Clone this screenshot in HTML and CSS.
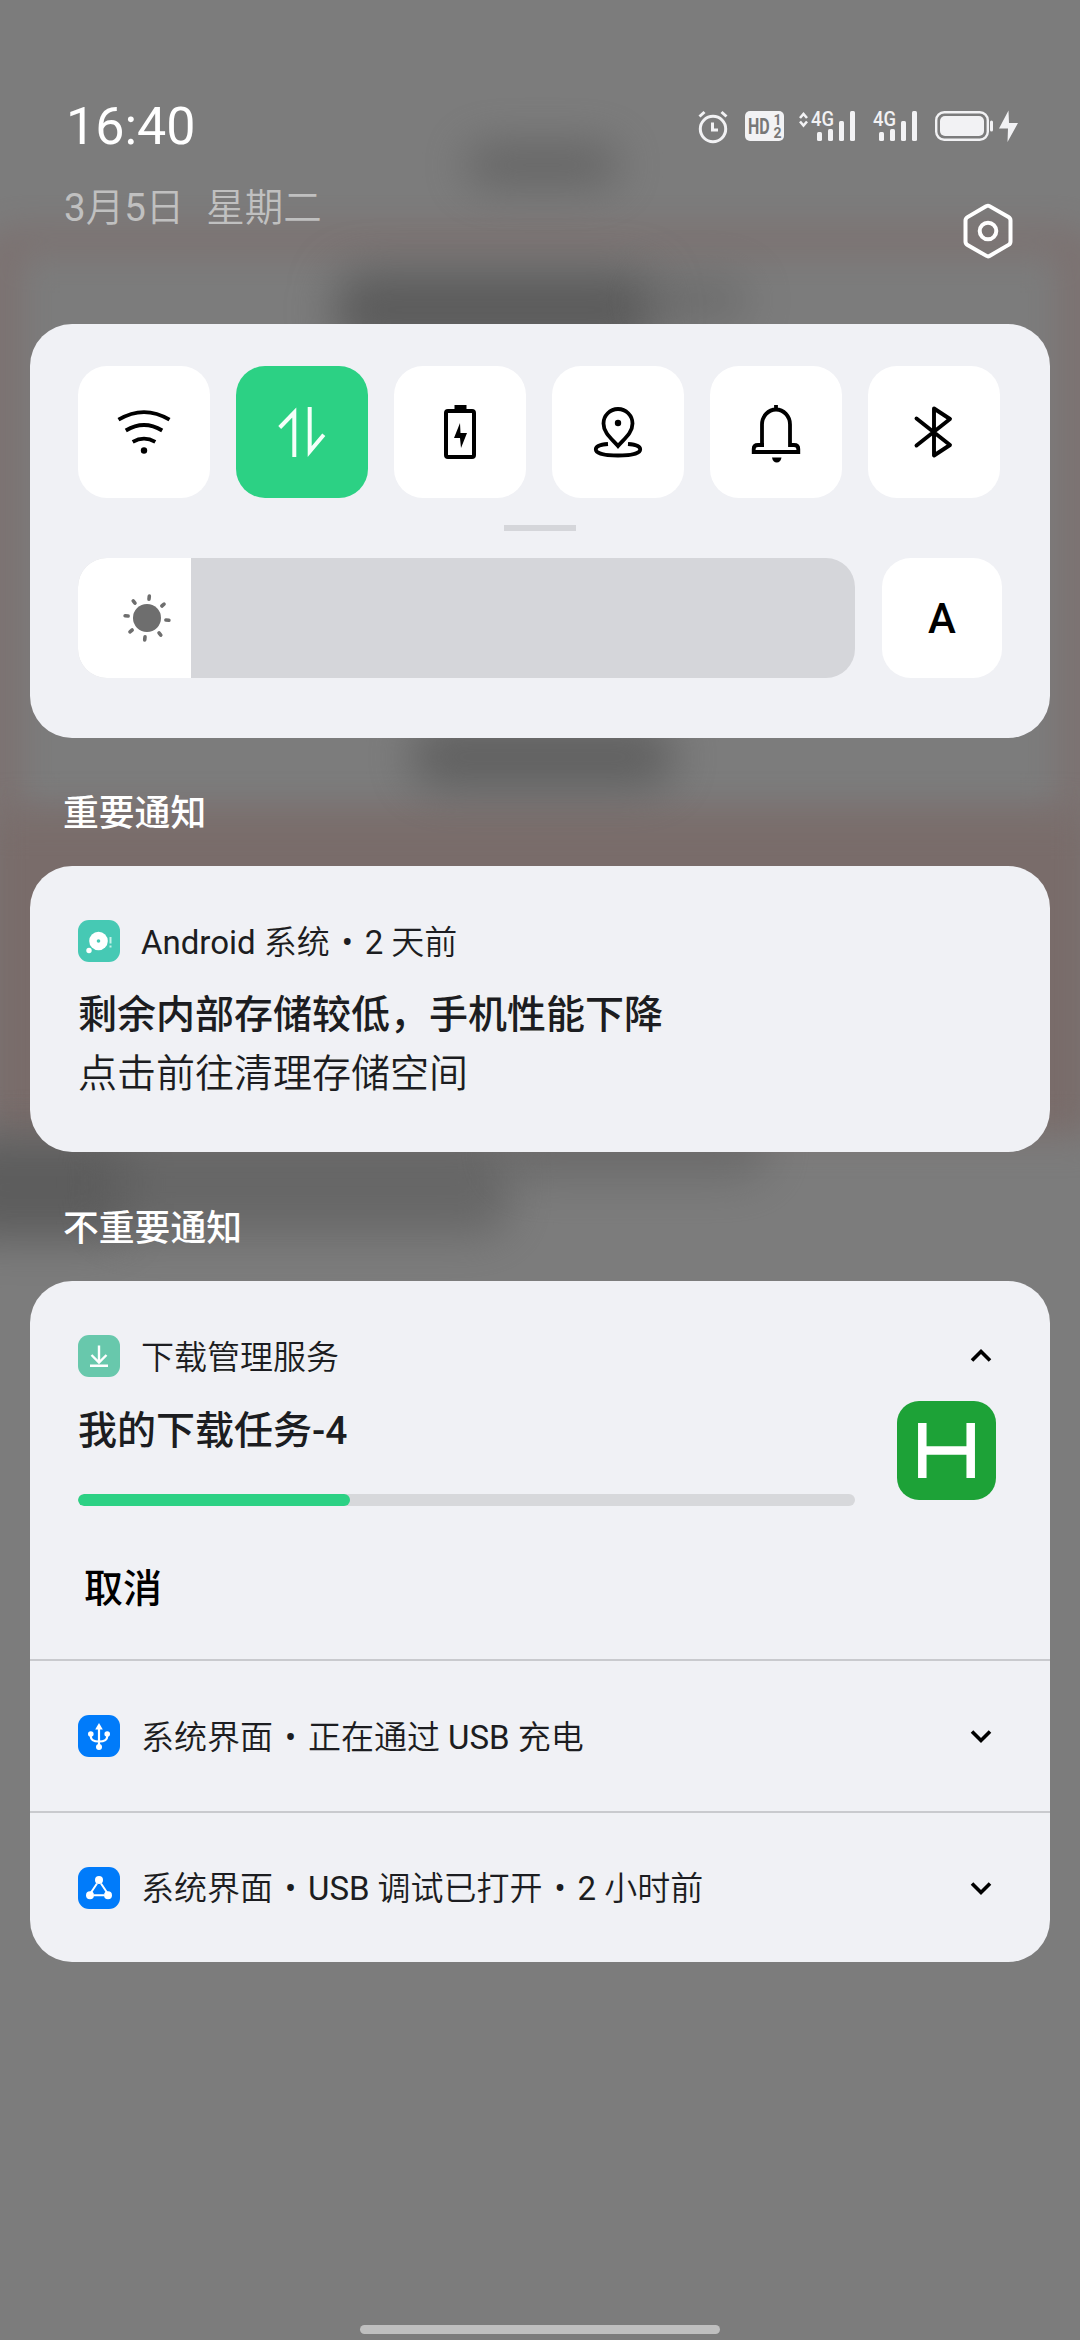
FILE: index.html
```html
<!DOCTYPE html>
<html lang="zh-CN">
<head>
<meta charset="utf-8">
<title>通知中心</title>
<link rel="stylesheet" href="styles.css">
</head>
<body>
<div class="screen">
  <div class="backdrop" aria-hidden="true">
    <i class="blob frame-a"></i><i class="blob frame-b"></i>
    <i class="blob b1"></i><i class="blob b2"></i><i class="blob b3"></i><i class="blob b4"></i><i class="blob b5"></i><i class="blob b6"></i><i class="blob b7"></i>
  </div>

  <header class="top">
    <div class="when">
      <div class="clock">16:40</div>
      <div class="date"><span><b>3</b>月<b>5</b>日</span><span>星期二</span></div>
    </div>
    <div class="status">
      <svg class="status-icons" width="330" height="40" viewBox="0 0 330 40" fill="#f2f2f4">
        <g fill="none" stroke="#f2f2f4" stroke-width="3"><circle cx="22" cy="23" r="12.700"/><path d="M21.500 16.500v7.500h5.500M8.500 10.500l5-4.500M35.500 10.500l-5-4.500"/></g>
        <rect x="54" y="5" width="39" height="30" rx="5"/>
        <g class="hd"><text transform="translate(57 28) scale(.8 1.100)" font-size="20">HD</text><text x="82.500" y="18.500" font-size="14">1</text><text x="82.500" y="31.500" font-size="14">2</text></g>
        <path d="M109 12l3.500-4 3.500 4M109 15.500l3.500 4 3.500-4" fill="none" stroke="#f2f2f4" stroke-width="2.600"/>
        <g class="net"><text x="120" y="20" textLength="23" lengthAdjust="spacingAndGlyphs">4G</text><text x="182" y="20" textLength="23" lengthAdjust="spacingAndGlyphs">4G</text></g>
        <g><rect x="126" y="26" width="5" height="9" rx="1.500"/><rect x="137" y="23" width="5" height="12" rx="1.500"/><rect x="148" y="15" width="5" height="20" rx="1.500"/><rect x="159" y="5" width="5" height="30" rx="1.500"/></g>
        <g><rect x="188" y="26" width="5" height="9" rx="1.500"/><rect x="199" y="23" width="5" height="12" rx="1.500"/><rect x="210" y="15" width="5" height="20" rx="1.500"/><rect x="221" y="5" width="5" height="30" rx="1.500"/></g>
        <rect x="245.200" y="6.200" width="51.600" height="27.600" rx="8" fill="none" stroke="#f2f2f4" stroke-width="2.400"/>
        <rect x="249" y="10" width="44" height="20" rx="5"/><rect x="299" y="14.500" width="3" height="11" rx="1.500"/>
        <path d="M317.500 4.500L308 22.500h9L316.500 36 327 17h-9z"/>
      </svg>
      <svg class="gear" width="56" height="60" viewBox="0 0 56 60" fill="none" stroke="#fff" stroke-width="4"><path d="M26.500 5.100q1.500-.9 3 0l19 11q2 1.200 2 3.500v20.800q0 2.300-2 3.500l-19 11q-1.500.9-3 0l-19-11q-2-1.200-2-3.500V19.600q0-2.300 2-3.500z"/><circle cx="28" cy="30" r="8.300"/></svg>
    </div>
  </header>

  <section class="card controls">
    <div class="tiles">
      <div class="tile"><svg viewBox="0 0 132 132"><g fill="none" stroke="#000" stroke-width="3.800"><path d="M40.500 53.700Q66 38.500 91.500 53.700M47.800 64.500Q66 53.500 84.200 64.500M54.700 75.800Q66 69.500 77.300 75.800"/></g><circle cx="66" cy="84.500" r="3.200"/></svg></div>
      <div class="tile on"><svg viewBox="0 0 132 132" fill="none" stroke="#f4fff9" stroke-width="4"><path d="M43.700 61.500L58.300 46.500V91M73.700 41v44.500L87.800 68.700"/></svg></div>
      <div class="tile"><svg viewBox="0 0 132 132"><rect x="52" y="45" width="28" height="46" rx="2" fill="none" stroke="#000" stroke-width="4"/><path d="M60.500 39h12v5h-12zM66 57l-6 15h6l1 10 6-15h-6.500z"/></svg></div>
      <div class="tile"><svg viewBox="0 0 132 132"><path d="M66 80C60 73 51.500 67 51.500 57.500a14.500 14.500 0 0 1 29 0C80.500 67 72 73 66 80z" fill="none" stroke="#000" stroke-width="3.800"/><circle cx="66" cy="57" r="3.200"/><path d="M56 78C48.500 78.500 43.800 80.500 43.800 83.500c0 4 9.900 6 22.200 6s22.200-2 22.200-6c0-3-4.700-5-12.200-5.500" fill="none" stroke="#000" stroke-width="3.800"/></svg></div>
      <div class="tile"><svg viewBox="0 0 132 132"><g fill="none" stroke="#000" stroke-width="3.800"><path d="M66 39v5M52 79V58.500a14 15 0 0 1 28 0V79h4q4.300 0 4.300 4v3H43.700V83q0-4 4.300-4h6"/></g><path d="M62 91.500h9.500q-1 5-4.750 5T62 91.500z"/></svg></div>
      <div class="tile"><svg viewBox="0 0 132 132" fill="none" stroke="#000" stroke-width="3.900" stroke-linejoin="round" stroke-linecap="round"><path d="M48.500 52.500L82 79 66 89.500v-47L82 53 48.500 79.500"/></svg></div>
    </div>
    <div class="handle"></div>
    <div class="brightness">
      <div class="slider"><div class="level"><svg viewBox="0 0 48 48" width="48" height="48" fill="#6e6e6e"><circle cx="24" cy="24" r="14"/><g stroke="#6e6e6e" stroke-width="3.600" stroke-linecap="round" transform="rotate(6 24 24)"><path d="M24 2v3M24 43v3M2 24h3M43 24h3M8.500 8.500l2 2M37.500 37.500l2 2M39.500 8.500l-2 2M10.500 37.500l-2 2"/></g></svg></div></div>
      <div class="auto">A</div>
    </div>
  </section>

  <h2 class="label">重要通知</h2>
  <section class="card storage">
    <div class="row">
      <svg class="app" viewBox="0 0 42 42"><rect width="42" height="42" rx="11" fill="#46c9b4"/><circle cx="20.500" cy="21" r="9.300" fill="#fff"/><circle cx="20.500" cy="21" r="1.800" fill="#46c9b4"/><circle cx="11" cy="30.500" r="2.700" fill="#fff"/><path d="M32.500 17v6.500M32.500 25.500v2" stroke="#c5f1e8" stroke-width="2"/></svg>
      <span class="source"><b>Android</b> 系统<i class="dot">•</i><b>2</b> 天前</span>
    </div>
    <div class="title">剩余内部存储较低，手机性能下降</div>
    <div class="body">点击前往清理存储空间</div>
  </section>

  <h2 class="label second">不重要通知</h2>
  <section class="card list">
    <article class="download">
      <div class="row">
        <svg class="app" viewBox="0 0 42 42"><rect width="42" height="42" rx="11" fill="#68c8ac"/><path d="M21 10.500v16M13.500 20l7.500 7.500 7.500-7.500M12 30.800h18" fill="none" stroke="#fff" stroke-width="2.400"/></svg>
        <span class="source">下载管理服务</span>
        <svg class="chev" viewBox="0 0 24 16"><path d="M3 12.500l9-9 9 9"/></svg>
      </div>
      <div class="task">
        <div class="task-main">
          <div class="title">我的下载任务-4</div>
          <div class="progress"><div class="done" style="width:35%"></div></div>
        </div>
        <svg class="thumb" viewBox="0 0 99 99"><rect width="99" height="99" rx="22" fill="#1da237"/><path d="M25.300 22v55M73.700 22v55M25 49.500h49" stroke="#fff" stroke-width="8.500"/></svg>
      </div>
      <div class="cancel">取消</div>
    </article>
    <article class="row compact">
      <svg class="app" viewBox="0 0 42 42"><rect width="42" height="42" rx="11" fill="#007bfa"/><g fill="none" stroke="#fff" stroke-width="2.200"><path d="M21 12v20M12.800 19v2.500q0 5 8.200 5t8.200-5V19"/></g><path d="M21 8l3.800 6.500h-7.600z" fill="#fff"/><circle cx="21" cy="32" r="3" fill="#fff"/><circle cx="12.800" cy="19" r="2.800" fill="#fff"/><circle cx="29.200" cy="19" r="2.800" fill="#fff"/></svg>
      <span class="source">系统界面<i class="dot">•</i>正在通过 <b>USB</b> 充电</span>
      <svg class="chev" viewBox="0 0 24 16"><path d="M3 3.500l9 9 9-9"/></svg>
    </article>
    <article class="row compact">
      <svg class="app" viewBox="0 0 42 42"><rect width="42" height="42" rx="11" fill="#007bfa"/><path d="M19 16.500l-6 9M23 16.500l6 9M16 28.300h10" stroke="#fff" stroke-width="2"/><circle cx="21" cy="13" r="4" fill="#fff"/><circle cx="12" cy="28.300" r="4" fill="#fff"/><circle cx="30" cy="28.300" r="4" fill="#fff"/></svg>
      <span class="source">系统界面<i class="dot">•</i><b>USB</b> 调试已打开<i class="dot">•</i><b>2</b> 小时前</span>
      <svg class="chev" viewBox="0 0 24 16"><path d="M3 3.500l9 9 9-9"/></svg>
    </article>
  </section>
  <div class="home"></div>
</div>
</body>
</html>
```
FILE: styles.css
```css
* { box-sizing: border-box; }
body { margin: 0; font-family: Roboto, "Noto Sans CJK SC", sans-serif; background: #7c7c7c; color: #1c1d21; }
svg { display: block; flex: none; }
.screen { position: relative; isolation: isolate; width: 1080px; height: 2340px; padding: 0 30px 6px; display: flex; flex-direction: column; overflow: hidden; background: #7c7c7c; }

/* out-of-focus app behind the shade */
.backdrop { position: absolute; inset: 0; z-index: -1; overflow: hidden; }
.blob { position: absolute; filter: blur(22px); background: #5c5c5c; border-radius: 30px; }
.frame-a { left: -15px; top: 228px; width: 1110px; height: 610px; background: none; border: 30px solid #7c6866; border-width: 24px 34px; filter: blur(17px); opacity: .6; }
.frame-b { left: -15px; top: 815px; width: 1110px; height: 320px; border-radius: 0; background: #796c6a; filter: blur(18px); }
.b1 { left: 465px; top: 143px; width: 155px; height: 44px; opacity: .7; }
.b2 { left: 335px; top: 270px; width: 320px; height: 80px; }
.b3 { left: 410px; top: 725px; width: 265px; height: 64px; opacity: .85; }
.b4 { left: -50px; top: 1135px; width: 180px; height: 105px; background: #505050; opacity: .7; }
.b5 { left: 100px; top: 1130px; width: 410px; height: 105px; opacity: .65; }
.b6 { left: 500px; top: 1120px; width: 270px; height: 60px; opacity: .5; }
.b7 { left: 640px; top: 275px; width: 110px; height: 50px; opacity: .45; }

.top { height: 324px; flex: none; display: flex; justify-content: space-between; }
.when { padding: 96px 0 0 34px; }
.clock { font-size: 52px; line-height: 62px; font-weight: 400; color: #fff; padding-left: 2px; }
.date { display: flex; gap: 22px; font-size: 38.500px; line-height: 50px; margin-top: 25px; color: #c0c0c0; font-weight: 350; white-space: nowrap; }
.date b { font-weight: 400; }
.status { display: flex; flex-direction: column; align-items: flex-end; padding: 106px 29px 0 0; }
.hd { fill: #777; font-family: Roboto, sans-serif; font-weight: 700; }
.net { font-family: Roboto, sans-serif; font-size: 20px; font-weight: 500; }
.gear { margin: 55px 5px 0 0; }

.card { flex: none; background: #f0f1f5; border-radius: 42px; }
.controls { height: 414px; padding: 42px 48px 0; }
.tiles { display: flex; gap: 26px; }
.tile { width: 132px; height: 132px; border-radius: 29px; background: #fff; }
.tile.on { background: #2cd184; }
.handle { width: 72px; height: 6px; background: #d5d6da; margin: 27px auto; }
.brightness { display: flex; gap: 27px; }
.slider { width: 777px; height: 120px; border-radius: 29px; overflow: hidden; background: #d5d6da; flex: none; }
.level { width: 113px; height: 120px; background: #fff; display: flex; align-items: center; padding-left: 45px; }
.auto { width: 120px; height: 120px; flex: none; border-radius: 29px; background: #fff; color: #000; font-size: 42px; font-weight: 500; display: flex; align-items: center; justify-content: center; }

.label { height: 128px; flex: none; margin: 0; padding: 50px 0 0 33px; font-size: 35.800px; line-height: 52px; font-weight: 500; color: #fff; }
.label.second { height: 129px; padding-top: 51px; }
.storage { height: 286px; padding: 54px 48px 0; }
.row { display: flex; align-items: center; height: 42px; }
.app { width: 42px; height: 42px; }
.source { margin-left: 21px; padding-top: 3px; font-size: 33px; line-height: 42px; font-weight: 350; white-space: nowrap; }
.source b { font-weight: 400; }
.dot { font-style: normal; font-weight: 400; display: inline-block; width: 35px; text-align: center; }
.title { font-size: 39px; line-height: 58px; font-weight: 500; white-space: nowrap; }
.body { font-size: 39px; line-height: 58px; font-weight: 350; }
.storage .title { margin-top: 23px; line-height: 60px; }

.list { height: 681px; display: flex; flex-direction: column; }
.download { height: 380px; padding: 54px 54px 0 48px; border-bottom: 2px solid #c9cace; }
.chev { width: 24px; height: 16px; margin-left: auto; fill: none; stroke: #000; stroke-width: 3.600; }
.download .chev { margin-right: 3px; }
.task { display: flex; justify-content: space-between; align-items: flex-start; margin-top: 21px; height: 108px; }
.task-main { width: 777px; padding-top: 4px; }
.thumb { width: 99px; height: 99px; margin-top: 3px; }
.progress { margin-top: 34px; height: 12px; border-radius: 6px; background: #d7d8db; overflow: hidden; }
.done { height: 12px; border-radius: 6px; background: #2cd184; }
.cancel { margin: 54px 0 0 6px; font-size: 39px; line-height: 58px; font-weight: 500; color: #000; }
.compact { height: 150px; padding: 0 57px 0 48px; }
.compact + .compact { height: 151px; border-top: 2px solid #c9cace; }
.home { width: 360px; height: 9px; border-radius: 5px; background: #bfbfbf; margin: auto auto 0; }
```
